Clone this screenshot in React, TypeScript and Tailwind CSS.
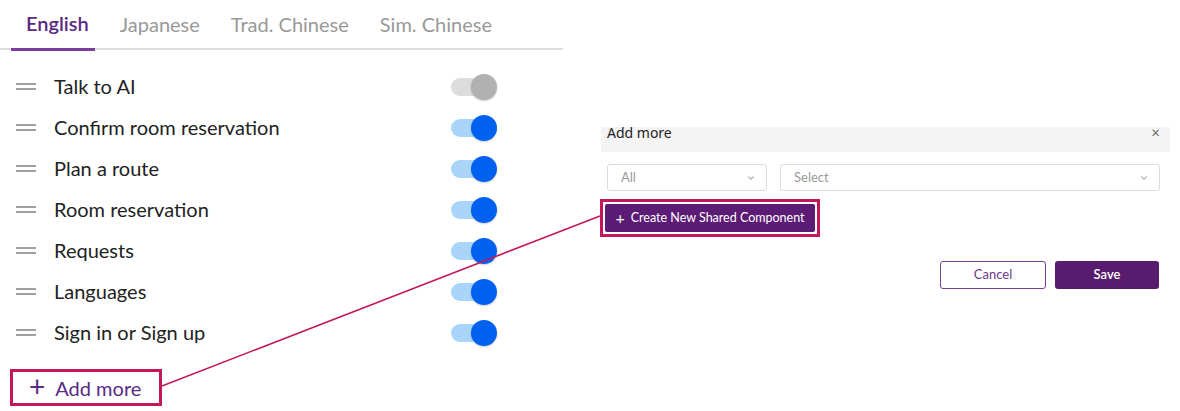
import React, { useState } from "react";

/* ------------------------------------------------------------------ */
/*  Data                                                              */
/* ------------------------------------------------------------------ */

const TABS = ["English", "Japanese", "Trad. Chinese", "Sim. Chinese"];

const ITEMS = [
  { label: "Talk to AI", on: false },
  { label: "Confirm room reservation", on: true },
  { label: "Plan a route", on: true },
  { label: "Room reservation", on: true },
  { label: "Requests", on: true },
  { label: "Languages", on: true },
  { label: "Sign in or Sign up", on: true },
];

const FONT = { fontFamily: "Lato, 'Noto Sans', sans-serif" };

/* ------------------------------------------------------------------ */
/*  Bits                                                              */
/* ------------------------------------------------------------------ */

function Toggle({ on }: { on: boolean }) {
  return (
    <div className="relative w-[46px] h-[26px] flex items-center">
      <div
        className={`w-[42px] h-[18px] rounded-full ${on ? "bg-[#a9d5fb]" : "bg-[#dcdcdc]"}`}
      />
      <div
        className={`absolute right-0 top-0 w-[26px] h-[26px] rounded-full shadow-[0_1px_2px_rgba(0,0,0,0.2)] ${
          on ? "bg-[#0060ef]" : "bg-[#b1b1b1]"
        }`}
      />
    </div>
  );
}

function Chevron() {
  return (
    <svg className="w-[10px] h-[10px] text-[#9a9a9a]" fill="none" stroke="currentColor" viewBox="0 0 24 24">
      <path strokeLinecap="round" strokeLinejoin="round" strokeWidth={2.5} d="M6 9l6 6 6-6" />
    </svg>
  );
}

/* ------------------------------------------------------------------ */
/*  Component                                                         */
/* ------------------------------------------------------------------ */

export default function App() {
  const [active, setActive] = useState(0);

  return (
    <div className="relative w-[1180px] h-[411px] bg-white overflow-hidden" style={FONT}>
      <div className="flex">
        {/* Left: language tabs + list */}
        <div className="w-[563px]">
          <div className="flex pl-[11px] h-[50px] border-b-2 border-[#dcdcdc]">
            {TABS.map((tab, i) => (
              <button
                key={tab}
                onClick={() => setActive(i)}
                className={`pl-[15px] pr-[6px] mr-[10px] h-[51px] pb-[3px] text-[20px] leading-none ${
                  i === active
                    ? "text-[#5a2a84] border-b-[3px] border-[#7a3f9d] font-semibold"
                    : "text-[#999]"
                }`}
              >
                {tab}
              </button>
            ))}
          </div>

          <div className="mt-[16px]">
            {ITEMS.map((item) => (
              <div key={item.label} className="flex items-center h-[41px]">
                <div className="ml-[16px] w-[20px] flex flex-col gap-[3px]">
                  <span className="block h-[2px] bg-[#a0a0a0]" />
                  <span className="block h-[2px] bg-[#a0a0a0]" />
                </div>
                <span className="ml-[18px] flex-1 text-[20px] text-[#222] -mt-[2px]">{item.label}</span>
                <div className="mr-[66px]">
                  <Toggle on={item.on} />
                </div>
              </div>
            ))}
          </div>

          <div className="mt-[16px] ml-[10px] w-[152px] h-[37px] border-[3px] border-[#c2185b] flex items-center gap-[10px] pl-[16px] text-[#5a2a84]">
            <span className="text-[28px] leading-none -mt-[3px]">+</span>
            <span className="text-[20px] leading-none">Add more</span>
          </div>
        </div>

        {/* Right: add more dialog */}
        <div className="ml-[38px] w-[569px]">
          <div className="mt-[127px] h-[25px] bg-[#f4f4f4] flex items-start justify-between pl-[6px] pr-[10px]">
            <span
              className="text-[14px] leading-[12px] text-[#222]"
              style={{ fontFamily: "'Noto Sans', 'Open Sans', sans-serif" }}
            >
              Add more
            </span>
            <span className="text-[15px] leading-[10px] text-[#666]">×</span>
          </div>

          <div className="mt-[12px] flex gap-[13px] pl-[6px] pr-[10px]">
            <div className="w-[160px] h-[27px] border border-[#dcdcdc] rounded-[3px] flex items-center justify-between pl-[13px] pr-[10px] text-[13px] text-[#9a9a9a]">
              All
              <Chevron />
            </div>
            <div className="flex-1 h-[27px] border border-[#dcdcdc] rounded-[3px] flex items-center justify-between pl-[13px] pr-[10px] text-[13px] text-[#9a9a9a]">
              Select
              <Chevron />
            </div>
          </div>

          <div className="mt-[8px] -ml-[1px] w-[220px] h-[38px] border-[3px] border-[#c2185b] p-[2px]">
            <div className="h-full bg-[#5c1b74] rounded-[2px] flex items-center justify-center gap-[6px] text-white text-[12.5px]">
              <span className="text-[16px] leading-none -mt-[1px]">+</span>
              Create New Shared Component
            </div>
          </div>

          <div className="mt-[24px] flex justify-end gap-[9px] pr-[11px]">
            <button className="w-[106px] h-[28px] border border-[#7a3f9d] rounded-[3px] text-[13px] text-[#6a3a8c]">
              Cancel
            </button>
            <button className="w-[104px] h-[28px] bg-[#581c6f] rounded-[3px] text-[13px] text-white font-semibold">
              Save
            </button>
          </div>
        </div>
      </div>

      {/* Connector between the two highlighted boxes */}
      <svg className="absolute inset-0 pointer-events-none" width="1180" height="411">
        <line x1="162" y1="386" x2="600" y2="216" stroke="#c2185b" strokeWidth="1.6" />
      </svg>
    </div>
  );
}
